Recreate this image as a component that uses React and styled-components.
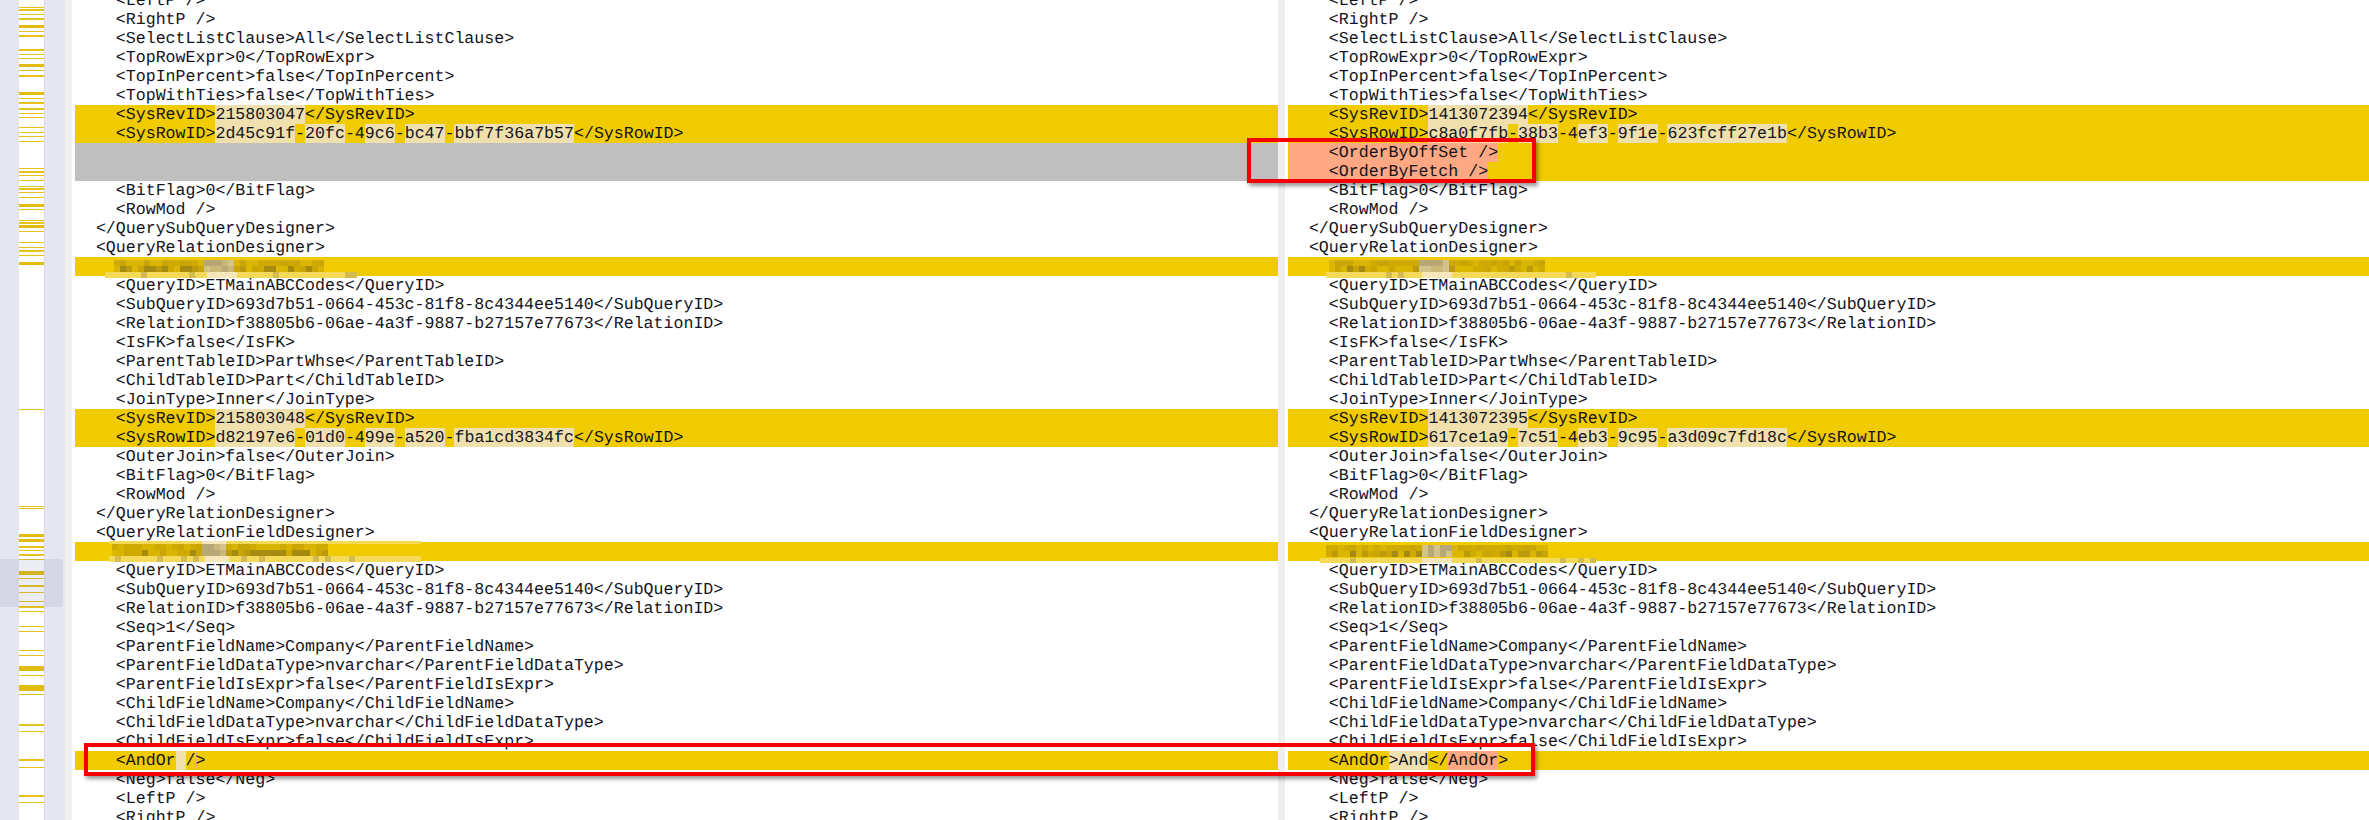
import React from 'react'
import styled, { createGlobalStyle } from 'styled-components'

const GlobalStyle = createGlobalStyle`
  html, body {
    margin: 0;
    padding: 0;
    height: 820px;
    overflow: hidden;
    background: #fff;
  }
`

const Page = styled.div`
  position: relative;
  display: flex;
  width: 2369px;
  height: 820px;
  overflow: hidden;
`
const Overview = styled.div`
  position: relative;
  flex: none;
  width: 65px;
  display: flex;
  background: #e6e6f2;
  svg {
    margin-left: 19px;
    display: block;
    background: #fff;
    border-right: 1px solid #d9d9ea;
  }
`
const OverviewThumb = styled.div`
  position: absolute;
  left: 0;
  top: 559px;
  width: 63px;
  height: 48px;
  background: rgba(120, 120, 170, 0.14);
  border-radius: 0 4px 4px 0;
`
const Divider = styled.div`
  flex: none;
  width: 7px;
  background: #efefef;
  margin-right: 3px;
`
const Pane = styled.div`
  flex: ${props => props.$width ? 'none' : '1'};
  width: ${props => props.$width ? props.$width + 'px' : 'auto'};
  margin-top: -9px;
  font-family: "Liberation Mono", "Courier New", monospace;
  font-size: 16.6px;
  line-height: 19px;
  color: #14141c;
  white-space: pre;
  text-rendering: geometricPrecision;
`
const rowColors = { yellow: '#f0cb00', gray: '#bfbfbf' }
const Row = styled.div`
  position: relative;
  height: 19px;
  padding-left: 1px;
  background: ${props => rowColors[props.$tone] || 'transparent'};
`
const markColors = { pale: '#f0e0ad', salmon: '#ffa883' }
const Chunk = styled.span`
  background: ${props => markColors[props.$mark] || 'transparent'};
  box-shadow: ${props => props.$mark === 'caret' ? 'inset 1px 0 0 #ffa883' : 'none'};
`
const Patch = styled.svg`
  position: absolute;
  display: block;
  overflow: visible;
`
const CalloutBox = styled.div`
  position: absolute;
  left: ${props => props.$left}px;
  top: ${props => props.$top}px;
  width: ${props => props.$width}px;
  height: ${props => props.$height}px;
  box-sizing: border-box;
  border: 4px solid #f40000;
  box-shadow: 2px 3px 4px rgba(0, 0, 0, 0.4);
`

// yellow diff marks in the overview strip: [y, height]
const marks = [
  [7, 1], [9, 2], [14, 1], [18, 2], [25, 3], [31, 1], [35, 2], [49, 2], [54, 1], [58, 1], [64, 3], [70, 1], [75, 2],
  [92, 3], [98, 1], [102, 2], [108, 2], [113, 1], [117, 1], [127, 1], [132, 1], [136, 1], [141, 1],
  [168, 1], [171, 2], [175, 1], [180, 1], [186, 1], [188, 2], [192, 1], [197, 1], [204, 3], [209, 1],
  [220, 1], [222, 2], [225, 3], [231, 1], [242, 1], [247, 1], [250, 2], [255, 1], [262, 3],
  [409, 1], [506, 1], [508, 1], [534, 3], [539, 3], [546, 2], [550, 1], [554, 2], [559, 1], [571, 4], [578, 1],
  [585, 2], [592, 1], [601, 1], [606, 2], [611, 1], [626, 1], [631, 1], [650, 1], [655, 1],
  [666, 5], [675, 1], [685, 6], [694, 1], [724, 2], [731, 1], [759, 2], [767, 1], [795, 2], [802, 1],
]

function OverviewMarks() {
  return (
    <svg width="25" height="820">
      {marks.map(([y, h]) => <rect key={y} x="0" y={y} width="25" height={h} fill={h > 2 ? '#e0bc0c' : '#e6c31a'} />)}
    </svg>
  )
}

// pixelated smudge over a blanked-out line. coordinates are relative to the row
function Smudge({ stripLeft, stripWidth, darkLeft, darkWidth, paleLeft, paleWidth, darkTop, stripTop, stripHeight, topStrip, seed }) {
  let s = seed
  const next = () => {
    s = (s * 9301 + 49297) % 233280
    return s / 233280
  }
  const cells = []
  const darks = ['#d9b400', '#cfab00', '#c9a606', '#bb9b0c', '#a78b10', '#dcb700']
  for (let r = 0; r < 2; r++) {
    for (let x = 0; x < darkWidth; x += 6) {
      const cx = darkLeft + x
      const inPale = cx >= paleLeft && cx < paleLeft + paleWidth
      const fill = inPale ? ['#c9b878', '#b8a878', '#d3c28a'][Math.floor(next() * 3)] : darks[Math.floor(next() * (r === 0 ? 3 : 6))]
      cells.push(<rect key={'d' + r + x} x={cx} y={darkTop + r * 6} width="6" height="6" fill={fill} />)
    }
  }
  for (let x = 0; x < stripWidth; x += 6) {
    const cx = stripLeft + x
    const inPale = cx >= paleLeft && cx < paleLeft + paleWidth
    const odd = next() > 0.88
    cells.push(<rect key={'s' + x} x={cx} y={stripTop} width="6" height={stripHeight} fill={inPale ? '#f5e7bb' : odd ? '#d3bb52' : '#f4da58'} />)
  }
  return (
    <Patch width="1" height="1" style={{ left: 0, top: 0 }}>
      {topStrip && <rect x={stripLeft} y="-1" width={stripWidth} height="3" fill="#f4da58" />}
      {topStrip && <rect x={paleLeft} y="-1" width={paleWidth} height="3" fill="#f5e7bb" />}
      {cells}
    </Patch>
  )
}

const y = (text) => [text]
const p = (text) => [text, 'pale']
const s = (text) => [text, 'salmon']
const c = (text) => [text, 'caret']

function buildRows(side) {
  const L = side === 'left'
  return [
    { t: '    <LeftP />' },
    { t: '    <RightP />' },
    { t: '    <SelectListClause>All</SelectListClause>' },
    { t: '    <TopRowExpr>0</TopRowExpr>' },
    { t: '    <TopInPercent>false</TopInPercent>' },
    { t: '    <TopWithTies>false</TopWithTies>' },
    {
      tone: 'yellow',
      parts: [y('    <SysRevID>'), p(L ? '215803047' : '1413072394'), y('</SysRevID>')],
    },
    {
      tone: 'yellow',
      parts: L
        ? [y('    <SysRowID>'), p('2d45c91f'), y('-'), p('20fc'), y('-4'), p('9c6'), y('-'), p('bc47'), y('-'), p('bbf7f36a7b57'), y('</SysRowID>')]
        : [y('    <SysRowID>'), p('c8a0f7fb'), y('-'), p('38b3'), y('-4'), p('ef3'), y('-'), p('9f1e'), y('-'), p('623fcff27e1b'), y('</SysRowID>')],
    },
    L ? { tone: 'gray', t: '' } : { tone: 'yellow', parts: [s('    <OrderByOffSet />')] },
    L ? { tone: 'gray', t: '' } : { tone: 'yellow', parts: [s('    <OrderByFetch />')] },
    { t: '    <BitFlag>0</BitFlag>' },
    { t: '    <RowMod />' },
    { t: '  </QuerySubQueryDesigner>' },
    { t: '  <QueryRelationDesigner>' },
    {
      tone: 'yellow',
      smudge: L
        ? { stripLeft: 30, stripWidth: 250, darkLeft: 39, darkWidth: 210, paleLeft: 128, paleWidth: 30, darkTop: 3, stripTop: 15, stripHeight: 6, seed: 11 }
        : { stripLeft: 38, stripWidth: 268, darkLeft: 41, darkWidth: 216, paleLeft: 131, paleWidth: 30, darkTop: 3, stripTop: 15, stripHeight: 6, seed: 47 },
    },
    { t: '    <QueryID>ETMainABCCodes</QueryID>' },
    { t: '    <SubQueryID>693d7b51-0664-453c-81f8-8c4344ee5140</SubQueryID>' },
    { t: '    <RelationID>f38805b6-06ae-4a3f-9887-b27157e77673</RelationID>' },
    { t: '    <IsFK>false</IsFK>' },
    { t: '    <ParentTableID>PartWhse</ParentTableID>' },
    { t: '    <ChildTableID>Part</ChildTableID>' },
    { t: '    <JoinType>Inner</JoinType>' },
    {
      tone: 'yellow',
      parts: [y('    <SysRevID>'), p(L ? '215803048' : '1413072395'), y('</SysRevID>')],
    },
    {
      tone: 'yellow',
      parts: L
        ? [y('    <SysRowID>'), p('d82197e6'), y('-'), p('01d0'), y('-4'), p('99e'), y('-'), p('a520'), y('-'), p('fba1cd3834fc'), y('</SysRowID>')]
        : [y('    <SysRowID>'), p('617ce1a9'), y('-'), p('7c51'), y('-4'), p('eb3'), y('-'), p('9c95'), y('-'), p('a3d09c7fd18c'), y('</SysRowID>')],
    },
    { t: '    <OuterJoin>false</OuterJoin>' },
    { t: '    <BitFlag>0</BitFlag>' },
    { t: '    <RowMod />' },
    { t: '  </QueryRelationDesigner>' },
    { t: '  <QueryRelationFieldDesigner>' },
    {
      tone: 'yellow',
      smudge: L
        ? { stripLeft: 34, stripWidth: 312, darkLeft: 37, darkWidth: 216, paleLeft: 127, paleWidth: 24, darkTop: 2, stripTop: 14, stripHeight: 6, topStrip: true, seed: 83 }
        : { stripLeft: 32, stripWidth: 275, darkLeft: 38, darkWidth: 222, paleLeft: 129, paleWidth: 30, darkTop: 3, stripTop: 16, stripHeight: 5, seed: 129 },
    },
    { t: '    <QueryID>ETMainABCCodes</QueryID>' },
    { t: '    <SubQueryID>693d7b51-0664-453c-81f8-8c4344ee5140</SubQueryID>' },
    { t: '    <RelationID>f38805b6-06ae-4a3f-9887-b27157e77673</RelationID>' },
    { t: '    <Seq>1</Seq>' },
    { t: '    <ParentFieldName>Company</ParentFieldName>' },
    { t: '    <ParentFieldDataType>nvarchar</ParentFieldDataType>' },
    { t: '    <ParentFieldIsExpr>false</ParentFieldIsExpr>' },
    { t: '    <ChildFieldName>Company</ChildFieldName>' },
    { t: '    <ChildFieldDataType>nvarchar</ChildFieldDataType>' },
    { t: '    <ChildFieldIsExpr>false</ChildFieldIsExpr>' },
    {
      tone: 'yellow',
      parts: L
        ? [y('    <AndOr'), p(' '), y('/'), c('>')]
        : [y('    <AndOr'), p('>And'), y('</'), s('AndOr'), y('>')],
    },
    { t: '    <Neg>false</Neg>' },
    { t: '    <LeftP />' },
    { t: '    <RightP />' },
  ]
}

function DiffPane({ side, width }) {
  return (
    <Pane $width={width}>
      {buildRows(side).map((row, i) => (
        <Row key={i} $tone={row.tone}>
          {row.parts
            ? row.parts.map(([text, mark], j) => <Chunk key={j} $mark={mark}>{text}</Chunk>)
            : row.t}
          {row.smudge && <Smudge {...row.smudge} />}
        </Row>
      ))}
    </Pane>
  )
}

export default function App() {
  return (
    <Page>
      <GlobalStyle />
      <Overview>
        <OverviewMarks />
        <OverviewThumb />
      </Overview>
      <Divider />
      <DiffPane side="left" width={1203} />
      <Divider />
      <DiffPane side="right" />
      <CalloutBox $left={1247} $top={138} $width={289} $height={45} />
      <CalloutBox $left={84} $top={743} $width={1451} $height={33} />
    </Page>
  )
}
